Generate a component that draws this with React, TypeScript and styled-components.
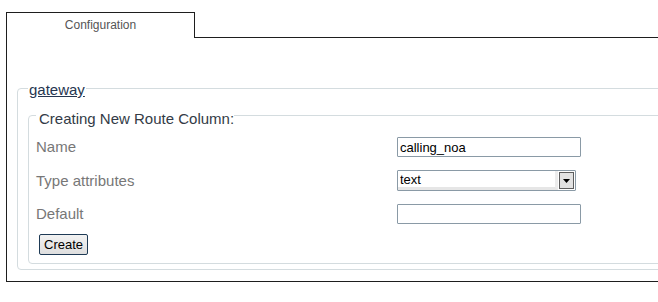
import React from "react";
import styled, { createGlobalStyle } from "styled-components";

const Global = createGlobalStyle`
  html, body { margin: 0; padding: 0; background: #fff; overflow: hidden; }
  body { font-family: "Liberation Sans", Arial, sans-serif; }
  * { box-sizing: border-box; }
`;

const Page = styled.div`
  width: 720px;
  padding: 12px 0 0 6px;
`;

const Panel = styled.div`
  border-left: 1px solid #1e1e1e;
  border-bottom: 1px solid #1e1e1e;
  height: 270px;
`;

const TabRow = styled.div`
  display: flex;
  height: 26px;
`;

const Tab = styled.div`
  width: 188px;
  border-top: 1px solid #1e1e1e;
  border-right: 1px solid #1e1e1e;
  font-size: 12px;
  color: #555;
  text-align: center;
  padding-top: 5px;
  line-height: 14px;
`;

const TabFiller = styled.div`
  flex: 1;
  border-bottom: 1px solid #1e1e1e;
`;

const Fieldset = styled.fieldset<{ $outer?: boolean }>`
  margin: ${(p) => (p.$outer ? "41px 0 0 10px" : "6px 0 0 0")};
  padding: ${(p) => (p.$outer ? "0 0 5px 10px" : "0 0 8px 7px")};
  border: 1px solid #d4dcdf;
  border-radius: 4px;
  min-width: 0;
`;

const Legend = styled.legend<{ $pad: number; $link?: boolean }>`
  font-size: 15px;
  line-height: 17px;
  padding: ${(p) => p.$pad}px ${(p) => (p.$link ? 1 : 0)}px 0 ${(p) => (p.$link ? 1 : 3)}px;
  color: ${(p) => (p.$link ? "#263650" : "#333b46")};
  text-decoration: ${(p) => (p.$link ? "underline" : "none")};
`;

const Form = styled.div`
  display: grid;
  grid-template-columns: 361px 1fr;
  row-gap: 13px;
  align-items: center;
  padding-top: 10px;
`;

const Label = styled.label`
  font-size: 15px;
  line-height: 18px;
  color: #777;
`;

const TextInput = styled.input`
  display: block;
  width: 184px;
  height: 20px;
  border: 1px solid #8a9aa6;
  border-radius: 1px;
  padding: 0 2px;
  font-family: "Liberation Sans", Arial, sans-serif;
  font-size: 13px;
  color: #000;
  background: #fff;
  outline: none;
`;

const SelectWrap = styled.div`
  position: relative;
  display: flex;
  width: 179px;
  height: 21px;
  border: 1px solid #8a9aa6;
  border-radius: 1px;
  background: #fff;
`;

const NativeSelect = styled.select`
  flex: 1;
  appearance: none;
  border: none;
  border-bottom: 3px solid #e6e6e6;
  border-right: 3px solid #ececec;
  margin: 0;
  padding: 0 0 0 2px;
  height: 19px;
  font-family: "Liberation Sans", Arial, sans-serif;
  font-size: 13px;
  line-height: 15px;
  color: #000;
  background: #fff;
  outline: none;
`;

const DropButton = styled.span`
  display: flex;
  align-items: center;
  justify-content: center;
  width: 15px;
  height: 17px;
  margin: 1px;
  border: 1px solid #5d5d5d;
  background: #e2e2e2;
  pointer-events: none;
`;

const ButtonRow = styled.div`
  grid-column: 1 / -1;
  padding-left: 3px;
  margin-top: -3px;
`;

const Button = styled.button`
  height: 21px;
  padding: 0 4px;
  border: 1px solid #1e3a55;
  border-radius: 2px;
  background: linear-gradient(#f2f2f2, #dedede);
  font-family: "Liberation Sans", Arial, sans-serif;
  font-size: 13px;
  color: #000;
  line-height: 16px;
`;

export default function App() {
  return (
    <>
      <Global />
      <Page>
        <Panel>
          <TabRow>
            <Tab>Configuration</Tab>
            <TabFiller />
          </TabRow>
          <Fieldset $outer>
            <Legend $pad={2} $link>
              gateway
            </Legend>
            <Fieldset>
              <Legend $pad={6}>Creating New Route Column:</Legend>
              <Form>
                <Label htmlFor="name">Name</Label>
                <div>
                  <TextInput id="name" defaultValue="calling_noa" />
                </div>
                <Label htmlFor="type">Type attributes</Label>
                <SelectWrap>
                  <NativeSelect id="type" defaultValue="text">
                    <option value="text">text</option>
                  </NativeSelect>
                  <DropButton>
                    <svg width="7" height="4" viewBox="0 0 7 4">
                      <polygon points="0,0 7,0 3.5,4" fill="#000" />
                    </svg>
                  </DropButton>
                </SelectWrap>
                <Label htmlFor="default">Default</Label>
                <div>
                  <TextInput id="default" />
                </div>
                <ButtonRow>
                  <Button>Create</Button>
                </ButtonRow>
              </Form>
            </Fieldset>
          </Fieldset>
        </Panel>
      </Page>
    </>
  );
}
